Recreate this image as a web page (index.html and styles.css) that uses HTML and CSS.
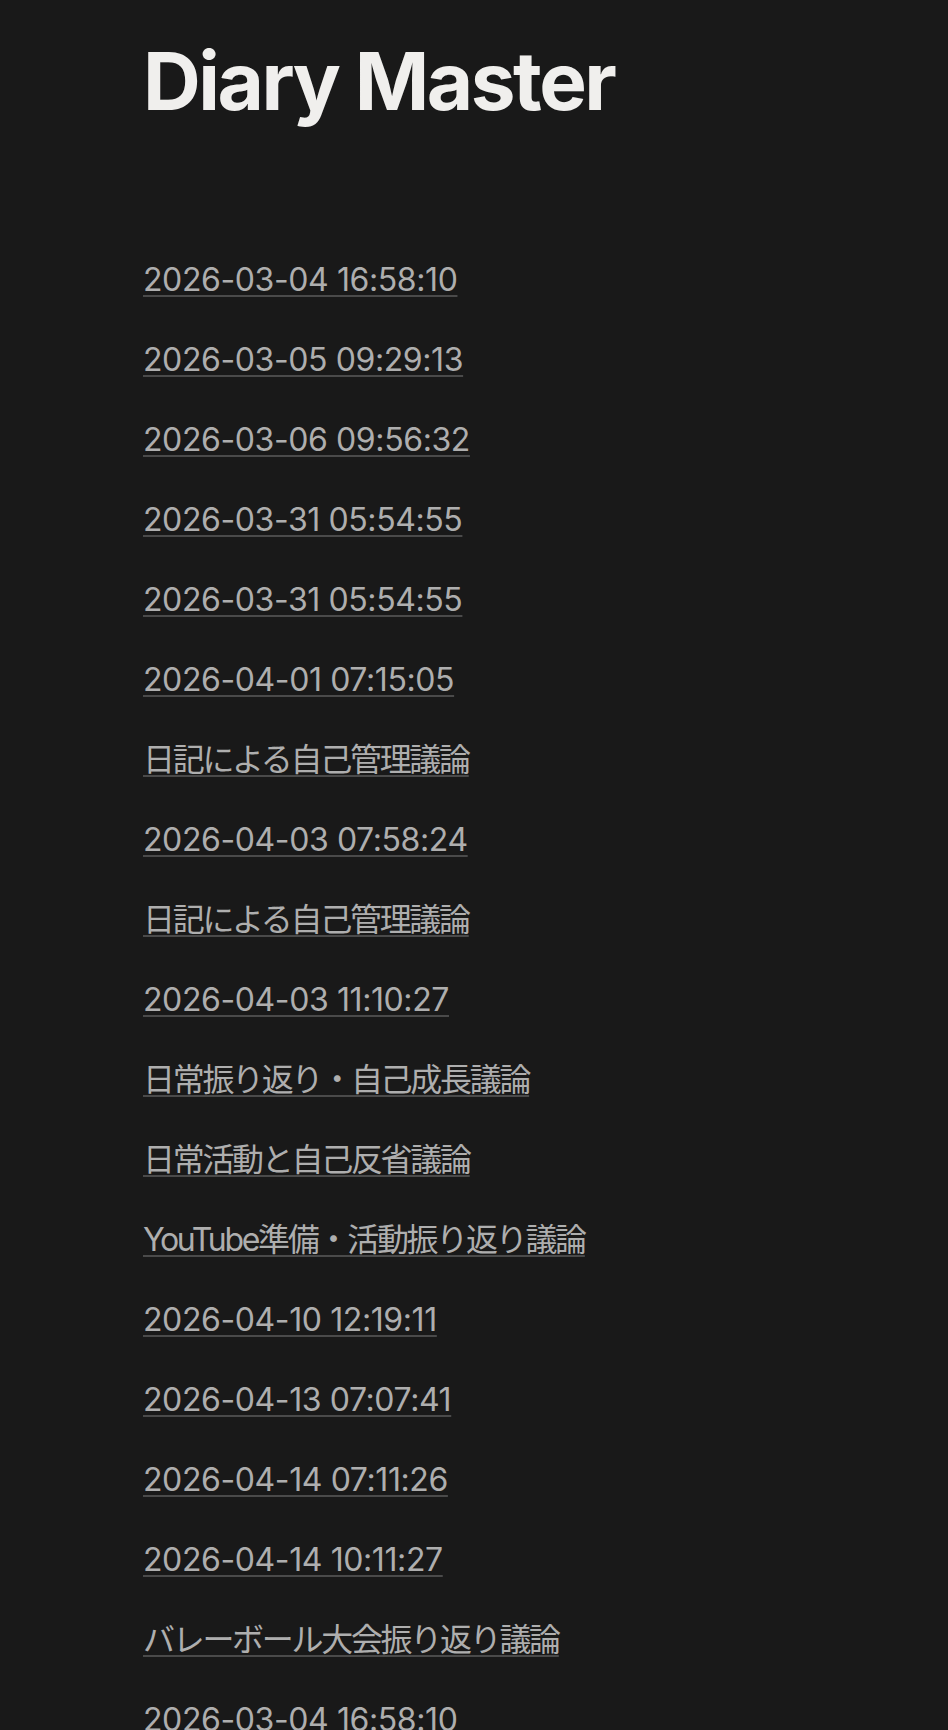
FILE: index.html
```html
<!DOCTYPE html>
<html lang="ja">
<head>
    <meta charset="UTF-8">
    <meta name="viewport" content="width=device-width, initial-scale=1.0">
    <title>Diary Master</title>
    <link rel="stylesheet" href="styles.css">
</head>
<body>

    <div class="page">
        <h1 class="title">Diary Master</h1>

        <!-- Diary entries -->
        <div class="entries">
            <a class="entry" href="#">2026-03-04 16:58:10</a>
            <a class="entry" href="#">2026-03-05 09:29:13</a>
            <a class="entry" href="#">2026-03-06 09:56:32</a>
            <a class="entry" href="#">2026-03-31 05:54:55</a>
            <a class="entry" href="#">2026-03-31 05:54:55</a>
            <a class="entry" href="#">2026-04-01 07:15:05</a>
            <a class="entry ja" href="#">日記による自己管理議論</a>
            <a class="entry" href="#">2026-04-03 07:58:24</a>
            <a class="entry ja" href="#">日記による自己管理議論</a>
            <a class="entry" href="#">2026-04-03 11:10:27</a>
            <a class="entry ja" href="#">日常振り返り・自己成長議論</a>
            <a class="entry ja" href="#">日常活動と自己反省議論</a>
            <a class="entry ja" href="#">YouTube準備・活動振り返り議論</a>
            <a class="entry" href="#">2026-04-10 12:19:11</a>
            <a class="entry" href="#">2026-04-13 07:07:41</a>
            <a class="entry" href="#">2026-04-14 07:11:26</a>
            <a class="entry" href="#">2026-04-14 10:11:27</a>
            <a class="entry ja" href="#">バレーボール大会振り返り議論</a>
            <a class="entry" href="#">2026-03-04 16:58:10</a>
        </div>
    </div>

</body>
</html>
```

FILE: styles.css
```css
html, body { margin: 0; background: #191919; }
body { font-family: Inter, "Noto Sans CJK JP", sans-serif; overflow: hidden; }
.page { padding: 33px 0 0 143px; }
.title { margin: 0 0 127px; font-size: 80px; line-height: 96px; font-weight: 700; letter-spacing: -2.5px; color: #f0efed; }
.entries { display: flex; flex-direction: column; align-items: flex-start; gap: 32px; }
.entry { font-size: 32px; line-height: 48px; letter-spacing: -0.4px; color: #aeaeae; text-decoration: underline; text-decoration-color: #4a4a4a; text-decoration-thickness: 2px; text-underline-offset: 4px; }
.ja { letter-spacing: -2.3px; }
```
